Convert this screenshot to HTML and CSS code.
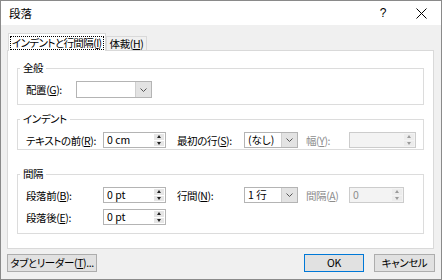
FILE: index.html
```html
<!DOCTYPE html>
<html lang="ja">
<head>
    <meta charset="utf-8">
    <title>段落</title>
    <link rel="stylesheet" href="styles.css">
</head>
<body>
    <div class="dialog">
        <div class="titlebar">
            <span class="title">段落</span>
            <span class="help">?</span>
            <span class="close">
                <svg width="11" height="11" viewBox="0 0 11 11"><path d="M0.5 0.5 L10.5 10.5 M10.5 0.5 L0.5 10.5" stroke="#000" stroke-width="1" fill="none"/></svg>
            </span>
        </div>

        <div class="tabs">
            <div class="tab active"><span class="focus">インデントと行間隔(<u>I</u>)</span></div>
            <div class="tab">体裁(<u>H</u>)</div>
        </div>

        <div class="panel">
            <fieldset class="group">
                <legend>全般</legend>
                <div class="row first">
                    <span class="lbl lbl-g">配置(<u>G</u>):</span>
                    <div class="combo combo-wide">
                        <span class="val"></span>
                        <span class="drop"><svg width="7" height="4" viewBox="0 0 7 4"><path d="M0.5 0.5 L3.5 3.5 L6.5 0.5" stroke="#555" fill="none"/></svg></span>
                    </div>
                </div>
            </fieldset>

            <fieldset class="group indent">
                <legend>インデント</legend>
                <div class="row first">
                    <span class="lbl lbl-a">テキストの前(<u>R</u>):</span>
                    <div class="spin w63">
                        <span class="val">0 cm</span>
                        <span class="updown"><span class="arr up"></span><span class="arr down"></span></span>
                    </div>
                    <span class="lbl lbl-b">最初の行(<u>S</u>):</span>
                    <div class="combo w54">
                        <span class="val">(なし)</span>
                        <span class="drop"><svg width="7" height="4" viewBox="0 0 7 4"><path d="M0.5 0.5 L3.5 3.5 L6.5 0.5" stroke="#555" fill="none"/></svg></span>
                    </div>
                    <span class="lbl lbl-c off">幅(<u>Y</u>):</span>
                    <div class="spin w67 disabled">
                        <span class="val"></span>
                        <span class="updown"><span class="arr up"></span><span class="arr down"></span></span>
                    </div>
                </div>
            </fieldset>

            <fieldset class="group spacing">
                <legend>間隔</legend>
                <div class="row first">
                    <span class="lbl lbl-a">段落前(<u>B</u>):</span>
                    <div class="spin w63">
                        <span class="val">0 pt</span>
                        <span class="updown"><span class="arr up"></span><span class="arr down"></span></span>
                    </div>
                    <span class="lbl lbl-b">行間(<u>N</u>):</span>
                    <div class="combo w54">
                        <span class="val">1 行</span>
                        <span class="drop"><svg width="7" height="4" viewBox="0 0 7 4"><path d="M0.5 0.5 L3.5 3.5 L6.5 0.5" stroke="#555" fill="none"/></svg></span>
                    </div>
                    <span class="lbl lbl-c off">間隔(<u>A</u>)</span>
                    <div class="spin w55 disabled">
                        <span class="val">0</span>
                        <span class="updown"><span class="arr up"></span><span class="arr down"></span></span>
                    </div>
                </div>
                <div class="row second">
                    <span class="lbl lbl-a">段落後(<u>E</u>):</span>
                    <div class="spin w63">
                        <span class="val">0 pt</span>
                        <span class="updown"><span class="arr up"></span><span class="arr down"></span></span>
                    </div>
                </div>
            </fieldset>
        </div>

        <div class="buttons">
            <button class="btn btn-tabs">タブとリーダー(<u>T</u>)...</button>
            <button class="btn btn-ok">OK</button>
            <button class="btn btn-cancel">キャンセル</button>
        </div>
    </div>
</body>
</html>
```

FILE: styles.css
```css
body {
    margin: 0;
    padding: 0;
    font-family: "Noto Sans CJK JP", "Liberation Sans", sans-serif;
    font-feature-settings: "palt";
    font-size: 10.5px;
    letter-spacing: -0.4px;
    color: #000;
    background: #f0f0f0;
}
.dialog {
    width: 442px;
    height: 280px;
    box-sizing: border-box;
    border: 1px solid #8a8a8a;
    background: #f0f0f0;
}
.titlebar {
    height: 24px;
    background: #fff;
    display: flex;
    align-items: center;
}
.title {
    font-size: 11.5px;
    letter-spacing: 0;
    margin-left: 8px;
}
.help {
    margin-left: auto;
    font-size: 12px;
    font-family: "Liberation Sans", sans-serif;
    margin-right: 30px;
}
.close {
    display: flex;
    margin-right: 14px;
}
.tabs {
    display: flex;
    align-items: flex-end;
    margin-left: 7px;
    margin-top: 8px;
    height: 17px;
}
.tab {
    height: 14px;
    box-sizing: border-box;
    border: 1px solid #d9d9d9;
    border-bottom: none;
    background: #f0f0f0;
    padding: 0 3px;
    line-height: 13px;
    display: flex;
    align-items: center;
    white-space: nowrap;
}
.tab.active {
    height: 18px;
    margin-bottom: -1px;
    background: #fff;
    position: relative;
    z-index: 1;
    padding: 0 1px;
    letter-spacing: -0.6px;
}
.focus {
    border: 1px dotted #000;
    padding: 0 1px;
    line-height: 12px;
}
.panel {
    height: 199px;
    box-sizing: border-box;
    margin: 0 7px 0 6px;
    border: 1px solid #d9d9d9;
    background: #fff;
    padding-top: 9px;
}
.group {
    margin: 0 9px;
    border: 1px solid #dcdcdc;
    padding: 0 8px 6px 8px;
    min-width: 0;
}
.group legend {
    padding: 0 3px;
    margin-left: -6px;
    line-height: 16px;
    height: 16px;
}
.group.indent {
    margin-top: 6px;
    padding-bottom: 1px;
}
.group.spacing {
    margin-top: 16px;
    padding-bottom: 8px;
}
.row {
    display: flex;
    align-items: center;
    height: 16px;
}
.row.first {
    margin-top: 5px;
}
.group:first-of-type .row {
    height: 17px;
}
.row.second {
    margin-top: 6px;
}
.lbl {
    white-space: nowrap;
    flex-shrink: 0;
}
.lbl-g { width: 50px; }
.lbl-a { width: 77px; }
.lbl-b { width: 67px; margin-left: 11px; }
.lbl-c { width: 43px; margin-left: 8px; }
.off { color: #8d8d8d; }
.combo, .spin {
    height: 100%;
    box-sizing: border-box;
    border: 1px solid #b4b4b4;
    background: #fff;
    display: flex;
    flex-shrink: 0;
}
.combo-wide { width: 76px; }
.w54 { width: 54px; }
.w55 { width: 55px; }
.w63 { width: 63px; }
.w67 { width: 67px; }
.val {
    flex: 1;
    padding-left: 3px;
    line-height: 14px;
    white-space: nowrap;
    overflow: hidden;
    letter-spacing: 0;
}
.drop {
    width: 15px;
    background: #e3e3e3;
    border-left: 1px solid #cfcfcf;
    display: flex;
    align-items: center;
    justify-content: center;
}
.updown {
    width: 10px;
    margin: 1px;
    display: flex;
    flex-direction: column;
    gap: 1px;
}
.arr {
    flex: 1;
    background: #e6e6e6;
    display: flex;
    align-items: center;
    justify-content: center;
}
.arr::after {
    content: "";
    border-left: 2.5px solid transparent;
    border-right: 2.5px solid transparent;
}
.arr.up::after { border-bottom: 3px solid #222; }
.arr.down::after { border-top: 3px solid #222; }
.spin.disabled {
    background: #f3f3f3;
    border-color: #cccccc;
    color: #8d8d8d;
}
.spin.disabled .arr { background: #ececec; }
.spin.disabled .arr.up::after { border-bottom-color: #9a9a9a; }
.spin.disabled .arr.down::after { border-top-color: #9a9a9a; }
.buttons {
    display: flex;
    margin: 5px 6px 0 6px;
    gap: 10px;
}
.btn {
    height: 18px;
    box-sizing: border-box;
    border: 1px solid #adadad;
    background: #e1e1e1;
    font-family: inherit;
    font-feature-settings: "palt";
    font-size: 10.5px;
    letter-spacing: -0.4px;
    padding: 0;
    line-height: 14px;
    white-space: nowrap;
}
.btn-tabs { width: 90px; }
.btn-ok {
    width: 60px;
    margin-left: auto;
    border-color: #0078d7;
}
.btn-cancel { width: 61px; }
```
